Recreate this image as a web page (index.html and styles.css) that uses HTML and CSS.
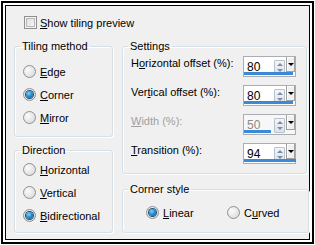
FILE: index.html
```html
<!DOCTYPE html>
<html lang="en">
<head>
  <meta charset="UTF-8">
  <title>Tiling</title>
  <link rel="stylesheet" href="styles.css">
</head>
<body>
  <div class="frame">
    <div class="panel">
      <div class="check"><span class="box"></span><span><u>S</u>how tiling preview</span></div>

      <div class="cols">
        <div class="col">
          <fieldset class="group tiling">
            <legend>Tiling method</legend>
            <div class="radio"><span class="dot"></span><span><u>E</u>dge</span></div>
            <div class="radio"><span class="dot on"></span><span><u>C</u>orner</span></div>
            <div class="radio"><span class="dot"></span><span><u>M</u>irror</span></div>
          </fieldset>
          <fieldset class="group direction">
            <legend>Direction</legend>
            <div class="radio"><span class="dot"></span><span><u>H</u>orizontal</span></div>
            <div class="radio"><span class="dot"></span><span><u>V</u>ertical</span></div>
            <div class="radio"><span class="dot on"></span><span><u>B</u>idirectional</span></div>
          </fieldset>
        </div>

        <div class="col">
          <fieldset class="group settings">
            <legend>Settings</legend>
            <div class="row">
              <span class="lbl">H<u>o</u>rizontal offset (%):</span>
              <div class="spin"><span class="val">80</span><span class="arrows"><i class="up"></i><i class="down"></i></span><span class="drop"></span><div class="bar" style="width:49px"></div></div>
            </div>
            <div class="row">
              <span class="lbl">Ver<u>t</u>ical offset (%):</span>
              <div class="spin"><span class="val">80</span><span class="arrows"><i class="up"></i><i class="down"></i></span><span class="drop"></span><div class="bar" style="width:49px"></div></div>
            </div>
            <div class="row off">
              <span class="lbl"><u>W</u>idth (%):</span>
              <div class="spin"><span class="val">50</span><span class="arrows"><i class="up"></i><i class="down"></i></span><span class="drop"></span><div class="bar" style="width:27px"></div></div>
            </div>
            <div class="row">
              <span class="lbl"><u>T</u>ransition (%):</span>
              <div class="spin"><span class="val">94</span><span class="arrows"><i class="up"></i><i class="down"></i></span><span class="drop"></span><div class="bar" style="width:52px"></div></div>
            </div>
          </fieldset>
          <fieldset class="group corner">
            <legend>Corner style</legend>
            <div class="pair">
              <div class="radio"><span class="dot on"></span><span><u>L</u>inear</span></div>
              <div class="radio"><span class="dot"></span><span>C<u>u</u>rved</span></div>
            </div>
          </fieldset>
        </div>
      </div>
    </div>
  </div>
</body>
</html>
```

FILE: styles.css
```css
body {
  margin: 0;
  background: #fff;
  font-family: "Liberation Sans", Arial, sans-serif;
  font-size: 11px;
  color: #000;
}

.frame {
  margin: 1px;
  width: 313px;
  height: 243px;
  box-sizing: border-box;
  border: 2px solid #000;
  padding: 2px;
  background: #fff;
}

.panel {
  height: 100%;
  box-sizing: border-box;
  border: 1px solid #000;
  background: #f0f0f0;
  padding: 10px 0 0 8px;
}

.check {
  display: flex;
  align-items: center;
  gap: 3px;
  margin-left: 10px;
  height: 13px;
}

.box {
  width: 11px;
  height: 11px;
  border: 1px solid #8e8f8f;
  background: linear-gradient(135deg, #dcdcdc, #f8f8f8);
  box-shadow: inset 0 0 0 1px #f4f4f4, inset 0 0 0 2px #b8b8b8;
}

.cols {
  display: flex;
  gap: 9px;
  margin-top: 11px;
}

.col {
  display: flex;
  flex-direction: column;
}

.group {
  margin: 0;
  padding: 0 0 0 8px;
  border: 1px solid #d5dfe5;
  border-radius: 3px;
  box-shadow: inset 1px 1px #fff, 1px 1px #fff;
  box-sizing: border-box;
}

.group legend {
  padding: 0 2px;
  margin-left: -3px;
  line-height: 13px;
}

.tiling {
  width: 99px;
  height: 97px;
  padding-top: 7px;
}

.direction {
  width: 99px;
  height: 89px;
  margin-top: 7px;
  padding-top: 1px;
}

.settings {
  width: 185px;
  height: 134px;
  padding-right: 10px;
}

.settings legend {
  margin-bottom: -4px;
}

.corner {
  width: 185px;
  height: 50px;
  margin-top: 9px;
  padding-top: 5px;
}

.radio {
  display: flex;
  align-items: center;
  gap: 4px;
  height: 23px;
}

.dot {
  width: 11px;
  height: 11px;
  border: 1px solid #8f9194;
  border-radius: 50%;
  background: radial-gradient(circle at 35% 35%, #fbfbfb, #d4d4d4);
  display: flex;
  align-items: center;
  justify-content: center;
}

.dot.on::after {
  content: "";
  width: 7px;
  height: 7px;
  border-radius: 50%;
  background: radial-gradient(circle at 40% 35%, #8ed0f5 0, #2a8fd2 45%, #0e4a7e 100%);
  box-shadow: 0 0 0 1px #1a4f7a;
}

.pair {
  display: flex;
  margin-left: 15px;
}

.pair .radio {
  width: 81px;
}

.row {
  display: flex;
  align-items: flex-start;
  justify-content: space-between;
  height: 29px;
}

.lbl {
  padding-top: 8px;
  line-height: 13px;
}

.row.off {
  color: #a0a0a0;
}

.spin {
  position: relative;
  width: 53px;
  height: 21px;
  margin-top: 7px;
  box-sizing: border-box;
  border: 1px solid #abadb3;
  background: #fff;
  display: flex;
  align-items: flex-start;
  padding: 3px 0 0 3px;
  color: #000;
}

.off .spin {
  color: #8a8a8a;
  background: #f7f7f7;
}

.val {
  flex: 1;
  font-size: 12px;
}

.arrows {
  width: 9px;
  height: 13px;
  border: 1px solid #b9c3cf;
  border-radius: 1px;
  background: linear-gradient(#f3f5f8, #dde3ea);
  display: flex;
  flex-direction: column;
  align-items: center;
  justify-content: space-around;
  margin-right: 1px;
}

.arrows i {
  width: 0;
  height: 0;
  border-left: 3px solid transparent;
  border-right: 3px solid transparent;
}

.arrows .up {
  border-bottom: 3px solid #7d8ea4;
}

.arrows .down {
  border-top: 3px solid #7d8ea4;
}

.drop {
  width: 8px;
  height: 15px;
  margin-top: -3px;
  border-left: 1px solid #a0a0a0;
  background: #f0f0f0;
  box-shadow: inset -1px -1px #a0a0a0, inset 1px 1px #fff;
  display: flex;
  align-items: center;
  justify-content: center;
}

.drop::after {
  content: "";
  border-left: 3px solid transparent;
  border-right: 3px solid transparent;
  border-top: 3px solid #000;
}

.bar {
  position: absolute;
  left: 0;
  bottom: 1px;
  height: 3px;
  background: #3a8ad8;
}
```
